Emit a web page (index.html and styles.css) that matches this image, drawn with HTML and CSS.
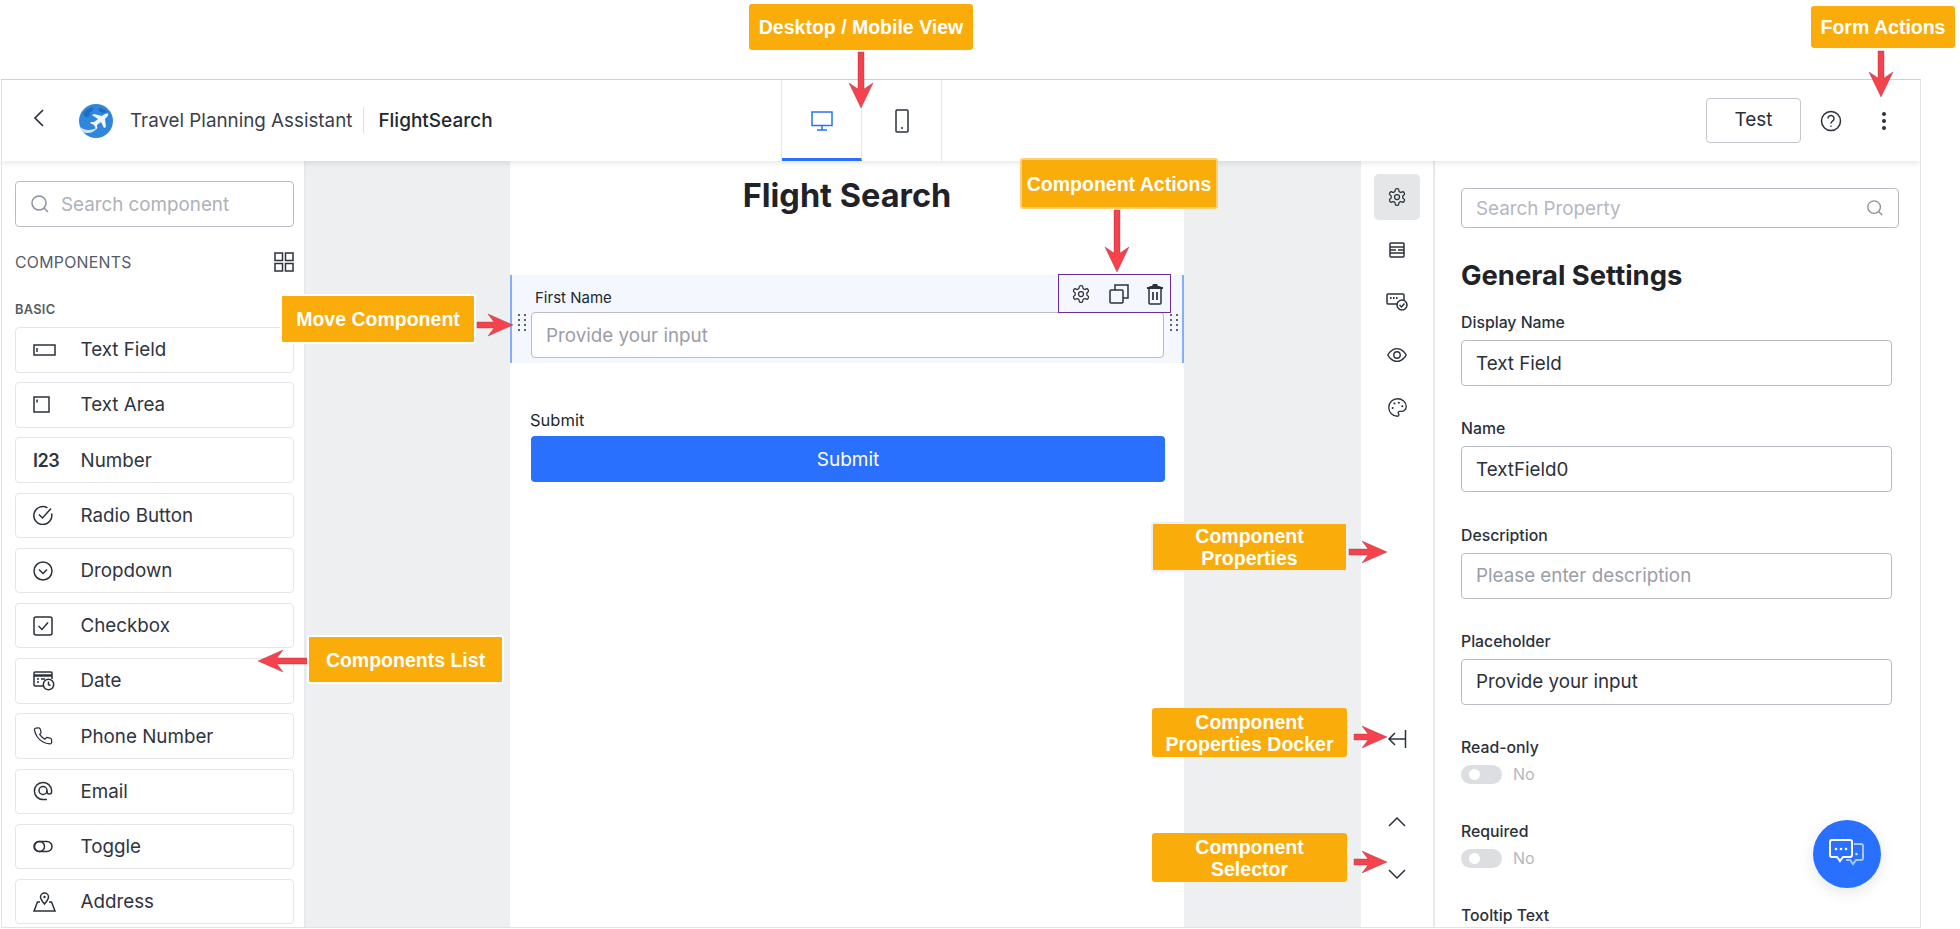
FILE: index.html
```html
<!DOCTYPE html>
<html lang="en">
<head>
  <meta charset="UTF-8">
  <meta name="viewport" content="width=device-width, initial-scale=1.0">
  <title>Form Builder Overview</title>
  <link rel="stylesheet" href="styles.css">
</head>
<body>
  <!-- shared icons -->
  <svg class="icon-defs" width="0" height="0">
    <symbol id="i-gear" viewBox="0 0 24 24">
      <path d="M12.22 2h-.44a2 2 0 0 0-2 2v.18a2 2 0 0 1-1 1.73l-.43.25a2 2 0 0 1-2 0l-.15-.08a2 2 0 0 0-2.73.73l-.22.38a2 2 0 0 0 .73 2.73l.15.1a2 2 0 0 1 1 1.72v.51a2 2 0 0 1-1 1.74l-.15.09a2 2 0 0 0-.73 2.73l.22.38a2 2 0 0 0 2.73.73l.15-.08a2 2 0 0 1 2 0l.43.25a2 2 0 0 1 1 1.73V20a2 2 0 0 0 2 2h.44a2 2 0 0 0 2-2v-.18a2 2 0 0 1 1-1.73l.43-.25a2 2 0 0 1 2 0l.15.08a2 2 0 0 0 2.73-.73l.22-.39a2 2 0 0 0-.73-2.73l-.15-.08a2 2 0 0 1-1-1.74v-.5a2 2 0 0 1 1-1.74l.15-.09a2 2 0 0 0 .73-2.73l-.22-.38a2 2 0 0 0-2.73-.73l-.15.08a2 2 0 0 1-2 0l-.43-.25a2 2 0 0 1-1-1.73V4a2 2 0 0 0-2-2z"/>
      <circle cx="12" cy="12" r="3"/>
    </symbol>
    <symbol id="i-search" viewBox="0 0 20 20">
      <circle cx="9" cy="9" r="7"/>
      <path d="M14 14l4 4"/>
    </symbol>
    <symbol id="i-dots" viewBox="0 0 10 18">
      <g class="fill-dark">
        <circle cx="2" cy="2" r="1"/><circle cx="8" cy="2" r="1"/>
        <circle cx="2" cy="7" r="1"/><circle cx="8" cy="7" r="1"/>
        <circle cx="2" cy="12" r="1"/><circle cx="8" cy="12" r="1"/>
        <circle cx="2" cy="17" r="1"/><circle cx="8" cy="17" r="1"/>
      </g>
    </symbol>
  </svg>

  <div class="page">
    <div class="frame">
      <header class="topbar">
        <div class="crumbs">
          <svg class="back" width="12" height="20" viewBox="0 0 12 20"><path d="M10 2L2 10l8 8"/></svg>
          <svg class="logo" width="34" height="34" viewBox="0 0 34 34">
            <circle cx="17" cy="17" r="17" fill="#2f86dc"/>
            <path d="M4 9c3-3 6-5 10-6 1 3-2 5-4 6 2 2 0 4-3 4-1 0-2-2-3-4z" fill="#1c6cc0"/>
            <path d="M20 4c3 0 6 2 8 4-2 1-5 1-6 0-1 0-3-2-2-4z" fill="#1c6cc0"/>
            <path d="M1 23c5 4 12 4 18 0-3 6-13 8-16 4-1-1-2-3-2-4z" fill="#cfe2f3"/>
            <path d="M29 10c1 1-1 3-3 5l1 8-2 1-3-6-4 3v3l-1 1-2-4-4-2 1-1h3l4-3-6-4 2-1 8 2c2-2 5-3 6-2z" fill="#eef6fc"/>
          </svg>
          <span class="crumb-app">Travel Planning Assistant</span>
          <span class="crumb-form">FlightSearch</span>
        </div>
        <div class="view-tabs">
          <div class="view-tab active">
            <svg width="22" height="20" viewBox="0 0 22 20"><rect x="1" y="1" width="20" height="13.5"/><path d="M11 14.5V19M6 19h10"/></svg>
          </div>
          <div class="view-tab">
            <svg width="14" height="24" viewBox="0 0 14 24"><rect x="1" y="1" width="12" height="22" rx="1"/><circle class="fill-dark" cx="7" cy="19" r="1"/></svg>
          </div>
        </div>
        <div class="top-actions">
          <button class="test-btn">Test</button>
          <svg class="help" width="22" height="22" viewBox="0 0 22 22"><circle cx="11" cy="11" r="9.5"/><path d="M8 8.5a3 3 0 1 1 4.6 2.5c-1 .7-1.6 1.2-1.6 2.5"/><circle class="fill-dark" cx="11" cy="16.2" r=".8"/></svg>
          <svg class="kebab" width="6" height="20" viewBox="0 0 6 20"><g class="fill-dark"><circle cx="3" cy="3" r="2"/><circle cx="3" cy="10" r="2"/><circle cx="3" cy="17" r="2"/></g></svg>
        </div>
      </header>

      <div class="workspace">
        <aside class="sidebar">
          <div class="search-box">
            <svg class="stroke-grey" width="20" height="20"><use href="#i-search"/></svg>
            <span>Search component</span>
          </div>
          <div class="side-head">
            <span>COMPONENTS</span>
            <svg width="20" height="20" viewBox="0 0 20 20"><rect x="1" y="1" width="7.5" height="7.5"/><rect x="11.5" y="1" width="7.5" height="7.5"/><rect x="1" y="11.5" width="7.5" height="7.5"/><rect x="11.5" y="11.5" width="7.5" height="7.5"/></svg>
          </div>
          <div class="side-group">BASIC</div>
          <ul class="comp-list">
            <li class="comp-item">
              <span class="comp-icon"><svg width="23" height="12" viewBox="0 0 23 12"><rect x="1" y="1" width="21" height="10"/><path d="M4 4v4"/></svg></span>
              Text Field
            </li>
            <li class="comp-item">
              <span class="comp-icon"><svg width="17" height="17" viewBox="0 0 17 17"><rect x="1" y="1" width="15" height="15"/><path d="M4 3.5v3"/></svg></span>
              Text Area
            </li>
            <li class="comp-item">
              <span class="comp-icon comp-num">I23</span>
              Number
            </li>
            <li class="comp-item">
              <span class="comp-icon"><svg width="20" height="20" viewBox="0 0 20 20"><path d="M18.6 8.5A9 9 0 1 1 14.5 2.8"/><path d="M6 9.5l3.5 3.5L18 3.5"/></svg></span>
              Radio Button
            </li>
            <li class="comp-item">
              <span class="comp-icon"><svg width="20" height="20" viewBox="0 0 20 20"><circle cx="10" cy="10" r="9"/><path d="M6 8.5l4 4 4-4"/></svg></span>
              Dropdown
            </li>
            <li class="comp-item">
              <span class="comp-icon"><svg width="20" height="20" viewBox="0 0 20 20"><rect x="1" y="1" width="18" height="18" rx="2"/><path d="M5.5 10l3.5 3.5 6-7"/></svg></span>
              Checkbox
            </li>
            <li class="comp-item">
              <span class="comp-icon"><svg width="22" height="20" viewBox="0 0 22 20"><path d="M11 15H2a1 1 0 0 1-1-1V2a1 1 0 0 1 1-1h16a1 1 0 0 1 1 1v6"/><path d="M1 4.5h18" stroke-width="2.5"/><path d="M4 8h2M8 8h4M4 11h2"/><circle cx="15.5" cy="13.5" r="5.2"/><path d="M15.5 10.5v3.2l2 1"/></svg></span>
              Date
            </li>
            <li class="comp-item">
              <span class="comp-icon"><svg width="20" height="20" viewBox="0 0 24 24"><path d="M22 16.92v3a2 2 0 0 1-2.18 2 19.79 19.79 0 0 1-8.63-3.07 19.5 19.5 0 0 1-6-6 19.79 19.79 0 0 1-3.07-8.67A2 2 0 0 1 4.11 2h3a2 2 0 0 1 2 1.72c.13.96.36 1.9.7 2.81a2 2 0 0 1-.45 2.11L8.09 9.91a16 16 0 0 0 6 6l1.27-1.27a2 2 0 0 1 2.11-.45c.91.34 1.85.57 2.81.7A2 2 0 0 1 22 16.92z" transform="rotate(-3 12 12)"/></svg></span>
              Phone Number
            </li>
            <li class="comp-item">
              <span class="comp-icon"><svg width="20" height="20" viewBox="0 0 20 20"><circle cx="10" cy="9.5" r="4"/><path d="M14 9.5v1.2a2.3 2.3 0 0 0 4.6 0V9.5A8.6 8.6 0 1 0 10 18.6h4"/></svg></span>
              Email
            </li>
            <li class="comp-item">
              <span class="comp-icon"><svg width="20" height="13" viewBox="0 0 20 13"><rect x="1" y="1.5" width="18" height="10" rx="5"/><circle cx="6.5" cy="6.5" r="5"/></svg></span>
              Toggle
            </li>
            <li class="comp-item">
              <span class="comp-icon"><svg width="23" height="20" viewBox="0 0 23 20"><path d="M11.5 12c-2-2.500-4-4.500-4-7a4 4 0 0 1 8 0c0 2.500-2 4.500-4 7z"/><circle class="fill-dark" cx="11.500" cy="5" r="1.200"/><path d="M7 10H4.500L1 19h21l-3.500-9H16"/></svg></span>
              Address
            </li>
          </ul>
        </aside>

        <main class="canvas">
          <div class="form">
            <h1 class="form-title">Flight Search</h1>
            <div class="form-row selected">
              <svg class="drag drag-left" width="10" height="18"><use href="#i-dots"/></svg>
              <svg class="drag drag-right" width="10" height="18"><use href="#i-dots"/></svg>
              <div class="row-actions">
                <svg width="20" height="20"><use href="#i-gear"/></svg>
                <svg width="20" height="20" viewBox="0 0 20 20"><rect x="1" y="6" width="13" height="13" rx="1"/><path d="M6 6V1h13v13h-5"/></svg>
                <svg width="18" height="22" viewBox="0 0 18 22"><path d="M3 6v14a1 1 0 0 0 1 1h10a1 1 0 0 0 1-1V6"/><path d="M1 5h16" stroke-width="2"/><path class="fill-dark" d="M2 5c1-2 3-2 4-2l1-2h4l1 2c1 0 3 0 4 2z"/><path d="M7 9v8M11 9v8" stroke-width="1.700"/></svg>
              </div>
              <label class="row-label">First Name</label>
              <div class="row-input">Provide your input</div>
            </div>
            <div class="submit-block">
              <label class="submit-label">Submit</label>
              <button class="submit-btn">Submit</button>
            </div>
          </div>
        </main>

        <nav class="rail">
          <div class="rail-btn active"><svg width="20" height="20"><use href="#i-gear"/></svg></div>
          <div class="rail-btn"><svg width="16" height="16" viewBox="0 0 16 16"><rect x="1" y="1" width="14" height="14" rx="1"/><path d="M1 5h14M1 11h14M1 8h6M9 8h6"/></svg></div>
          <div class="rail-btn"><svg width="22" height="18" viewBox="0 0 22 18"><path d="M12 11H2a1 1 0 0 1-1-1V2a1 1 0 0 1 1-1h15a1 1 0 0 1 1 1v5"/><path d="M4 5h1.500M7 5h1.500M10 5h1.500" stroke-width="1.800"/><circle cx="16" cy="12" r="5"/><path d="M13.500 12l2 2 3-3.500"/></svg></div>
          <div class="rail-btn"><svg width="22" height="22" viewBox="0 0 24 24"><path d="M2 12s3.500-7 10-7 10 7 10 7-3.500 7-10 7-10-7-10-7z"/><circle cx="12" cy="12" r="3.500"/></svg></div>
          <div class="rail-btn"><svg width="21" height="21" viewBox="0 0 24 24"><path d="M12 2C6.500 2 2 6.500 2 12s4.500 10 10 10c.926 0 1.648-.746 1.648-1.688 0-.437-.18-.835-.437-1.125-.29-.289-.438-.652-.438-1.125a1.640 1.640 0 0 1 1.668-1.668h1.996c3.051 0 5.555-2.503 5.555-5.554C21.965 6.012 17.461 2 12 2z"/><g class="fill-dark"><circle cx="13.500" cy="6.500" r="1.200"/><circle cx="17.500" cy="10.500" r="1.200"/><circle cx="8.500" cy="7.500" r="1.200"/><circle cx="6.500" cy="12.500" r="1.200"/></g></svg></div>
          <div class="rail-tool dock"><svg width="20" height="20" viewBox="0 0 20 20"><path d="M18.500 1v18M18.500 10H2M8 4l-6 6 6 6"/></svg></div>
          <div class="rail-tool up"><svg width="18" height="10" viewBox="0 0 18 10"><path d="M1 9l8-8 8 8"/></svg></div>
          <div class="rail-tool down"><svg width="18" height="10" viewBox="0 0 18 10"><path d="M1 1l8 8 8-8"/></svg></div>
        </nav>

        <section class="props">
          <div class="prop-search">
            <span>Search Property</span>
            <svg class="stroke-grey" width="18" height="18"><use href="#i-search"/></svg>
          </div>
          <h2 class="props-title">General Settings</h2>
          <div class="field">
            <label>Display Name</label>
            <div class="field-input">Text Field</div>
          </div>
          <div class="field">
            <label>Name</label>
            <div class="field-input">TextField0</div>
          </div>
          <div class="field">
            <label>Description</label>
            <div class="field-input empty">Please enter description</div>
          </div>
          <div class="field">
            <label>Placeholder</label>
            <div class="field-input">Provide your input</div>
          </div>
          <div class="field toggle-field">
            <label>Read-only</label>
            <div class="toggle-row"><span class="toggle"></span><span class="toggle-text">No</span></div>
          </div>
          <div class="field toggle-field">
            <label>Required</label>
            <div class="toggle-row"><span class="toggle"></span><span class="toggle-text">No</span></div>
          </div>
          <div class="field">
            <label>Tooltip Text</label>
          </div>
        </section>
      </div>
    </div>

    <!-- chat button over the panel -->
    <div class="chat-fab">
      <svg width="36" height="30" viewBox="0 0 36 30">
        <path class="chat-back" d="M25 5h7a2 2 0 0 1 2 2v12a2 2 0 0 1-2 2h-5l-3 4-3-4h-4"/>
        <circle cx="27.500" cy="15" r="1.200" fill="#dce8ff" stroke="none"/>
        <path class="chat-front" d="M3 1h18a2 2 0 0 1 2 2v13a2 2 0 0 1-2 2h-7l-3 4-3-4H3a2 2 0 0 1-2-2V3a2 2 0 0 1 2-2z"/>
        <circle cx="7" cy="10" r="1.300" fill="#fff" stroke="none"/><circle cx="12" cy="10" r="1.300" fill="#fff" stroke="none"/><circle cx="17" cy="10" r="1.300" fill="#fff" stroke="none"/>
      </svg>
    </div>

    <!-- annotations laid over the screenshot -->
    <svg class="arrows" width="1960" height="929" viewBox="0 0 1960 929">
      <g class="arrow" transform="translate(861 108) rotate(90)"><path d="M0 0l-25-12 6 9h-37v6h37l-6 9z"/></g>
      <g class="arrow" transform="translate(1881 97) rotate(90)"><path d="M0 0l-25-12 6 9h-27v6h27l-6 9z"/></g>
      <g class="arrow" transform="translate(1117 272) rotate(90)"><path d="M0 0l-25-12 6 9h-43v6h43l-6 9z"/></g>
      <g class="arrow" transform="translate(513 325)"><path d="M0 0l-25-11 6 8h-17v6h17l-6 8z"/></g>
      <g class="arrow" transform="translate(258 661) rotate(180)"><path d="M0 0l-25-11 6 8h-31v6h31l-6 8z"/></g>
      <g class="arrow" transform="translate(1387 552)"><path d="M0 0l-25-11 6 8h-19v6h19l-6 8z"/></g>
      <g class="arrow" transform="translate(1387 737)"><path d="M0 0l-25-11 6 8h-14v6h14l-6 8z"/></g>
      <g class="arrow" transform="translate(1387 862)"><path d="M0 0l-25-11 6 8h-14v6h14l-6 8z"/></g>
    </svg>
    <div class="note note-views">Desktop / Mobile View</div>
    <div class="note note-form">Form Actions</div>
    <div class="note note-actions">Component Actions</div>
    <div class="note note-move">Move Component</div>
    <div class="note note-list">Components List</div>
    <div class="note note-props">Component<br>Properties</div>
    <div class="note note-dock">Component<br>Properties Docker</div>
    <div class="note note-select">Component<br>Selector</div>
  </div>
</body>
</html>
```

FILE: styles.css
```css
* {
  box-sizing: border-box;
}
html, body {
  margin: 0;
  height: 929px;
  overflow: hidden;
  background-color: #ffffff;
}
body {
  font-family: Inter, 'Noto Sans', sans-serif;
  color: #2b303b;
}
svg {
  display: block;
  flex: none;
  fill: none;
  stroke: #2b303b;
  stroke-width: 1.5;
}
.fill-dark {
  fill: #2b303b;
  stroke: none;
}
.stroke-grey {
  stroke: #8b919c;
}
.icon-defs {
  position: absolute;
}
.page {
  position: relative;
  width: 1960px;
  height: 929px;
  padding: 79px 0 0 1px;
}
.frame {
  display: flex;
  flex-direction: column;
  width: 1920px;
  height: 849px;
  border: 1px solid #e2e3e5;
  border-top-color: #cfd0d2;
  overflow: hidden;
}

/* top bar */
.topbar {
  position: relative;
  z-index: 2;
  display: flex;
  align-items: center;
  flex: none;
  height: 81px;
  background-color: #ffffff;
  box-shadow: 0 2px 6px rgba(0, 0, 0, 0.1);
}
.crumbs {
  display: flex;
  align-items: center;
  width: 779px;
  padding-left: 31px;
}
.back {
  margin-top: -5px;
  stroke-width: 1.7;
}
.logo {
  margin-left: 34px;
  stroke: none;
}
.crumb-app {
  margin: -1px 0 0 17px;
  padding-right: 11px;
  border-right: 1px solid #dfe1e4;
  font-size: 18.800px;
  line-height: 27px;
  color: #3a3f4a;
}
.crumb-form {
  margin: -1px 0 0 14px;
  font-size: 19px;
  font-weight: 500;
  color: #23272f;
}
.view-tabs {
  display: flex;
  height: 100%;
  border-left: 1px solid #e4e6e9;
}
.view-tab {
  display: flex;
  align-items: center;
  justify-content: center;
  width: 80px;
  border-right: 1px solid #e4e6e9;
}
.view-tab.active {
  border-bottom: 3px solid #2970ff;
  padding-top: 3px;
}
.view-tab.active svg {
  stroke: #2970ff;
}
.top-actions {
  display: flex;
  align-items: center;
  margin-left: auto;
  padding-right: 33px;
}
.test-btn {
  width: 95px;
  height: 45px;
  margin-right: 19px;
  padding-bottom: 3px;
  font-family: inherit;
  font-size: 19px;
  color: #2b303b;
  background-color: #ffffff;
  border: 1px solid #c3c6cc;
  border-radius: 4px;
}
.help {
  margin-right: 39px;
}

/* main area */
.workspace {
  display: flex;
  flex: 1;
  min-height: 0;
}
.sidebar {
  flex: none;
  width: 304px;
  padding: 20px 10px 0 13px;
  border-right: 2px solid #e8e9ec;
}
.search-box {
  display: flex;
  align-items: center;
  height: 46px;
  padding-left: 14px;
  font-size: 18.800px;
  color: #adb1b9;
  border: 1px solid #b9bcc3;
  border-radius: 4px;
}
.search-box span {
  margin-left: 11px;
}
.side-head {
  display: flex;
  align-items: center;
  justify-content: space-between;
  height: 22px;
  margin-top: 24px;
  font-size: 15.800px;
  letter-spacing: 0.3px;
  color: #555b67;
}
.side-group {
  margin-top: 30px;
  font-size: 12.800px;
  font-weight: 600;
  line-height: 14px;
  letter-spacing: 0.3px;
  color: #555b67;
}
.comp-list {
  display: flex;
  flex-direction: column;
  gap: 9.700px;
  margin: 10px 0 0;
  padding: 0;
  list-style: none;
}
.comp-item {
  display: flex;
  align-items: center;
  height: 45.500px;
  padding-left: 17px;
  font-size: 18.800px;
  color: #2f3440;
  background-color: #ffffff;
  border: 1px solid #e4e6e9;
  border-radius: 4px;
}
.comp-icon {
  display: flex;
  align-items: center;
  flex: none;
  width: 47.500px;
}
.comp-num {
  font-size: 18px;
  font-weight: 600;
  letter-spacing: -0.5px;
}

.canvas {
  flex: none;
  width: 1055px;
  padding-left: 204px;
  background-color: #eeeff1;
}
.form {
  width: 674px;
  height: 100%;
  background-color: #ffffff;
}
.form-title {
  margin: 0;
  padding-top: 15px;
  font-size: 32.500px;
  font-weight: 700;
  line-height: 40px;
  text-align: center;
  color: #1f2329;
}
.form-row {
  position: relative;
  height: 88px;
  margin-top: 59px;
  padding: 14px 18px 0 19px;
  background-color: #f4f7fe;
  border-left: 2px solid #86aef7;
  border-right: 2px solid #86aef7;
}
.row-label {
  display: block;
  padding-left: 4px;
  font-size: 15px;
  line-height: 18px;
  color: #23272f;
}
.row-input {
  display: flex;
  align-items: center;
  height: 46px;
  margin-top: 5px;
  padding-left: 14px;
  font-size: 18.800px;
  color: #9a9ea7;
  background-color: #ffffff;
  border: 1px solid #b9bcc3;
  border-radius: 4px;
}
.row-actions {
  position: absolute;
  top: -1px;
  right: 11px;
  display: flex;
  align-items: center;
  justify-content: space-between;
  width: 113px;
  height: 39px;
  padding: 0 6px 0 12px;
  border: 1px solid #6a2c9e;
}
.drag {
  position: absolute;
  top: 38px;
}
.drag-left {
  left: 5px;
}
.drag-right {
  right: 3px;
}
.submit-block {
  padding: 47px 19px 0 21px;
}
.submit-label {
  display: block;
  margin-left: -1px;
  font-size: 16.500px;
  line-height: 20px;
  color: #23272f;
}
.submit-btn {
  width: 100%;
  height: 46px;
  margin-top: 6px;
  font-family: inherit;
  font-size: 19px;
  color: #ffffff;
  background-color: #2970ff;
  border: none;
  border-radius: 4px;
}

/* icon rail */
.rail {
  display: flex;
  flex-direction: column;
  align-items: center;
  flex: none;
  width: 74px;
  padding: 13px 0 0;
  border-right: 2px solid #e8e9ec;
}
.rail-btn {
  display: flex;
  align-items: center;
  justify-content: center;
  flex: none;
  width: 46px;
  height: 46px;
  margin-bottom: 6.500px;
  border-radius: 5px;
}
.rail-btn.active {
  background-color: #e5e6e8;
}
.rail-tool {
  display: flex;
  align-items: center;
  justify-content: center;
  flex: none;
  height: 20px;
}
.dock {
  margin-top: 292px;
}
.up {
  margin-top: 63px;
}
.down {
  margin-top: 32px;
}

/* property panel */
.props {
  flex: 1;
  min-width: 0;
  padding: 27px 0 0 26px;
  overflow: hidden;
}
.prop-search {
  display: flex;
  align-items: center;
  justify-content: space-between;
  width: 438px;
  height: 40px;
  padding: 0 14px;
  font-size: 18.800px;
  color: #b3b7be;
  border: 1px solid #b9bcc3;
  border-radius: 4px;
}
.props-title {
  margin: 31px 0 21px;
  font-size: 27.400px;
  font-weight: 700;
  line-height: 32px;
  color: #1f2329;
}
.field {
  margin-bottom: 32.300px;
}
.field label {
  display: block;
  padding-top: 1px;
  font-size: 15.800px;
  font-weight: 500;
  line-height: 20px;
  color: #2b303b;
}
.field-input {
  display: flex;
  align-items: center;
  width: 431px;
  height: 46px;
  margin-top: 7px;
  padding-left: 14px;
  font-size: 18.800px;
  color: #2b303b;
  border: 1px solid #b9bcc3;
  border-radius: 4px;
}
.field-input.empty {
  color: #9a9ea7;
}
.toggle-field {
  margin-bottom: 37px;
}
.toggle-row {
  display: flex;
  align-items: center;
  margin-top: 6px;
}
.toggle {
  position: relative;
  width: 41px;
  height: 19px;
  background-color: #dcdee1;
  border-radius: 10px;
}
.toggle::after {
  content: '';
  position: absolute;
  top: 4px;
  left: 8px;
  width: 11px;
  height: 11px;
  background-color: #ffffff;
  border-radius: 50%;
}
.toggle-text {
  margin-left: 11px;
  font-size: 16px;
  color: #b4b7bd;
}

.chat-fab {
  position: absolute;
  top: 820px;
  left: 1813px;
  z-index: 2;
  display: flex;
  align-items: center;
  justify-content: center;
  width: 68px;
  height: 68px;
  background-color: #2970ff;
  border-radius: 50%;
  box-shadow: 0 4px 16px rgba(0, 0, 0, 0.1);
}
.chat-front {
  stroke: #ffffff;
  stroke-width: 2;
}
.chat-back {
  stroke: #a9c6ff;
  stroke-width: 2;
}

/* annotations */
.arrows {
  position: absolute;
  top: 0;
  left: 0;
  z-index: 3;
  stroke: none;
}
.arrow {
  fill: #f5424c;
  stroke: #8a3b45;
  stroke-width: 0.400;
}
.note {
  position: absolute;
  z-index: 4;
  display: flex;
  align-items: center;
  justify-content: center;
  font-family: 'Liberation Sans', Arial, sans-serif;
  font-size: 19.500px;
  font-weight: 700;
  line-height: 22px;
  text-align: center;
  color: #ffffff;
  background-color: #f9ac0a;
  border-radius: 3px;
}
.note-views {
  top: 4px;
  left: 749px;
  width: 224px;
  height: 46px;
}
.note-form {
  top: 6px;
  left: 1811px;
  width: 144px;
  height: 42px;
}
.note-actions {
  top: 158px;
  left: 1020px;
  width: 198px;
  height: 51px;
  border: 2px solid #fbd078;
}
.note-move {
  top: 294px;
  left: 280px;
  width: 196px;
  height: 50px;
  border: 2px solid #ffffff;
}
.note-list {
  top: 635px;
  left: 307px;
  width: 197px;
  height: 49px;
  border: 2px solid #ffffff;
}
.note-props {
  top: 522px;
  left: 1151px;
  width: 197px;
  height: 50px;
  border: 2px solid #eeeff1;
}
.note-dock {
  top: 708px;
  left: 1152px;
  width: 195px;
  height: 49px;
}
.note-select {
  top: 833px;
  left: 1152px;
  width: 195px;
  height: 49px;
}
```
